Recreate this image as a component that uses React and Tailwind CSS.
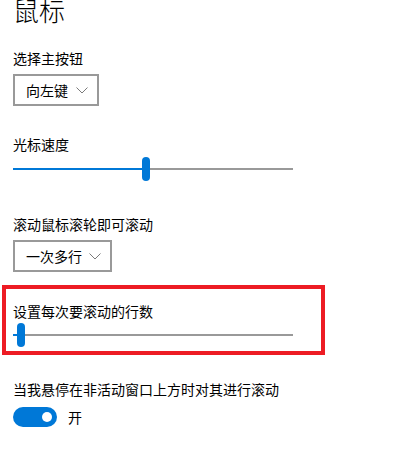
import React from "react";

const font = { fontFamily: '"Noto Sans CJK SC", "Noto Sans", sans-serif' };

const Chevron = () => (
  <svg width="12" height="7" viewBox="0 0 12 7" fill="none">
    <polyline points="0.5,0.5 6,6 11.5,0.5" stroke="#7a7a7a" strokeWidth="1" />
  </svg>
);

const Dropdown = ({ label, width }) => (
  <div
    className={`mt-[6px] h-[32px] ${width} border-2 border-[#999999] flex items-center justify-between pl-[11px] pr-[9px] text-[14px] text-black`}
  >
    <span>{label}</span>
    <Chevron />
  </div>
);

const Slider = ({ pos, className }) => (
  <div className={`relative h-[24px] w-[280px] ${className}`}>
    <div className="absolute left-0 right-0 top-[11px] h-[2px] bg-[#999999]" />
    <div className="absolute left-0 top-[11px] h-[2px] bg-[#0078d7]" style={{ width: pos }} />
    <div
      className="absolute top-0 h-[24px] w-[8px] rounded-full bg-[#0078d7]"
      style={{ left: pos }}
    />
  </div>
);

const Label = ({ children, className }) => (
  <div className={`text-[14px] leading-[20px] text-black ${className}`}>{children}</div>
);

export default function App() {
  return (
    <div className="relative min-h-screen bg-white overflow-hidden" style={font}>
      <div className="flex flex-col items-start px-[13px]">
        <h1 className="text-[26px] leading-[26px] mt-[-3px] text-black font-light">鼠标</h1>

        <Label className="mt-[25px]">选择主按钮</Label>
        <Dropdown label="向左键" width="w-[86px]" />

        <Label className="mt-[28px]">光标速度</Label>
        <Slider pos={129} className="mt-[3px]" />

        <Label className="mt-[33px]">滚动鼠标滚轮即可滚动</Label>
        <Dropdown label="一次多行" width="w-[99px]" />

        <Label className="mt-[29px]">设置每次要滚动的行数</Label>
        <Slider pos={4} className="mt-[2px]" />

        <Label className="mt-[32px]">当我悬停在非活动窗口上方时对其进行滚动</Label>
        <div className="mt-[8px] flex items-center">
          <div className="w-[44px] h-[20px] rounded-full bg-[#0078d7] flex items-center justify-end pr-[5px]">
            <div className="w-[10px] h-[10px] rounded-full bg-white" />
          </div>
          <span className="ml-[11px] text-[14px] leading-[20px] text-black">开</span>
        </div>
      </div>

      <div className="absolute left-[2px] top-[285px] w-[323px] h-[70px] border-[4px] border-[#ed1c24]" />
    </div>
  );
}
